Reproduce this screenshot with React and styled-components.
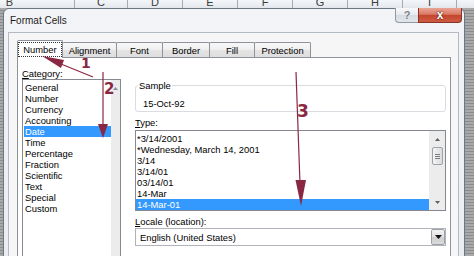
import React from "react";
import styled, { createGlobalStyle } from "styled-components";

const ui = `"Liberation Sans", Arial, sans-serif`;
const mark = "#8a2742";

const GlobalStyle = createGlobalStyle`
  html, body {
    margin: 0;
    padding: 0;
    overflow: hidden;
    background: #a8a8a8;
  }
`;

const columns = [
  { name: "B", w: 130 },
  { name: "C", w: 53 },
  { name: "D", w: 55 },
  { name: "E", w: 55 },
  { name: "F", w: 55 },
  { name: "G", w: 55 },
  { name: "H", w: 55 },
  { name: "I", w: 54 },
  { name: "J", w: 55 },
];

const categories = [
  "General",
  "Number",
  "Currency",
  "Accounting",
  "Date",
  "Time",
  "Percentage",
  "Fraction",
  "Scientific",
  "Text",
  "Special",
  "Custom",
];

const types = [
  "*3/14/2001",
  "*Wednesday, March 14, 2001",
  "3/14",
  "3/14/01",
  "03/14/01",
  "14-Mar",
  "14-Mar-01",
];

const tabs = [
  { label: "Number", w: 46 },
  { label: "Alignment", w: 55 },
  { label: "Font", w: 47 },
  { label: "Border", w: 48 },
  { label: "Fill", w: 46 },
  { label: "Protection", w: 57 },
];

const Screen = styled.div`
  position: relative;
  width: 474px;
  height: 256px;
  overflow: hidden;
  font-family: ${ui};
`;

const Sheet = styled.div`
  display: flex;
  flex-direction: column;
  height: 100%;
`;

const ColumnHeader = styled.div`
  display: flex;
  height: 8px;
  margin-left: -55px;
  overflow: hidden;
  background: linear-gradient(#f4f6f9, #e3e7ec);
`;

const ColCell = styled.div`
  flex: 0 0 ${(p) => p.w}px;
  box-sizing: border-box;
  display: flex;
  align-items: flex-end;
  justify-content: center;
  border-right: 1px solid #a3abb5;
  font-size: 11px;
  line-height: 11px;
  color: #3c3c3c;
`;

const SheetBody = styled.div`
  flex: 1;
  background: repeating-linear-gradient(
    to bottom,
    #a9a9a9 0 2px,
    #8c8c8c 2px 3px
  );
`;

const Dialog = styled.div`
  position: absolute;
  left: 3px;
  top: 8px;
  width: 462px;
  height: 262px;
  box-sizing: border-box;
  display: flex;
  flex-direction: column;
  padding: 0 5px 0 4px;
  border: 1px solid #6a7785;
  border-radius: 6px 6px 0 0;
  background: linear-gradient(#f2f4f7, #e9edf1);
`;

const TitleBar = styled.div`
  display: flex;
  justify-content: space-between;
  align-items: flex-start;
  height: 23px;
  flex: 0 0 23px;
`;

const Title = styled.div`
  margin: 6px 0 0 2px;
  font-size: 10px;
  line-height: 12px;
  color: #1c1c1c;
`;

const Controls = styled.div`
  display: flex;
  margin: -1px -3px 0 0;
`;

const HelpButton = styled.div`
  width: 23px;
  height: 15px;
  box-sizing: border-box;
  display: flex;
  align-items: center;
  justify-content: center;
  border: 1px solid #8f98a3;
  border-right: none;
  border-top: none;
  border-radius: 0 0 0 4px;
  background: linear-gradient(#f7f8fa, #e6e9ed 50%, #d6dbe1 51%, #e2e6ea);
  font-size: 11px;
  font-weight: bold;
  color: #7a828c;
  text-shadow: 0 0 1px #fff;
`;

const CloseButton = styled.div`
  width: 44px;
  height: 15px;
  box-sizing: border-box;
  display: flex;
  align-items: center;
  justify-content: center;
  border: 1px solid #8a3325;
  border-top: none;
  border-radius: 0 0 4px 0;
  background: linear-gradient(#e9a596, #d97a66 45%, #c4452e 52%, #cf5c43);
  font-size: 12px;
  font-weight: bold;
  line-height: 12px;
  color: #fff;
  text-shadow: 0 0 2px #5c1a10, 0 0 1px #5c1a10;
`;

const Client = styled.div`
  flex: 1;
  display: flex;
  flex-direction: column;
  padding: 7px 7px 0 8px;
  border: 1px solid #b3bac3;
  border-bottom: none;
  background: #f6f6f6;
`;

const TabStrip = styled.div`
  display: flex;
  align-items: flex-end;
  height: 18px;
  margin-bottom: -1px;
  position: relative;
  z-index: 1;
`;

const Tab = styled.div`
  position: relative;
  flex: 0 0 ${(p) => p.w}px;
  box-sizing: border-box;
  height: ${(p) => (p.active ? 18 : 15)}px;
  margin-left: ${(p) => (p.first ? 0 : -1)}px;
  margin-bottom: ${(p) => (p.active ? 0 : 1)}px;
  display: flex;
  align-items: center;
  justify-content: center;
  border: 1px solid #8e939b;
  border-bottom: none;
  border-radius: 2px 2px 0 0;
  z-index: ${(p) => (p.active ? 2 : 1)};
  background: ${(p) =>
    p.active
      ? "#ffffff"
      : "linear-gradient(#f8f8f8, #efefef 50%, #e4e4e4 51%, #dedede)"};
  font-size: 9.4px;
  color: #000;
  white-space: nowrap;
`;

const Focus = styled.span`
  align-self: stretch;
  flex: 1;
  margin: 1px 0 0;
  display: flex;
  align-items: center;
  justify-content: center;
  border: 1px dotted #333;
  height: 15px;
  box-sizing: border-box;
`;

const TabPage = styled.div`
  flex: 1;
  display: flex;
  gap: 14px;
  padding: 10px 4px 0 4px;
  border: 1px solid #8e939b;
  border-bottom: none;
  background: #ffffff;
`;

const LeftCol = styled.div`
  flex: 0 0 99px;
  display: flex;
  flex-direction: column;
`;

const RightCol = styled.div`
  flex: 1;
  display: flex;
  flex-direction: column;
`;

const FieldLabel = styled.div`
  height: 11px;
  margin-top: ${(p) => p.mt || 0}px;
  font-size: 9.4px;
  line-height: 11px;
  color: #000;
  white-space: nowrap;
  u {
    text-decoration-thickness: 1px;
    text-underline-offset: 1px;
  }
`;

const ListBox = styled.div`
  display: flex;
  height: ${(p) => p.h}px;
  margin-top: ${(p) => p.mt || 0}px;
  box-sizing: border-box;
  border: 1px solid #848991;
  background: #fff;
  overflow: hidden;
`;

const Items = styled.div`
  flex: 1;
  padding: 2px 0 0 ${(p) => p.inset}px;
`;

const Item = styled.div`
  height: 11px;
  padding-left: 1px;
  font-size: 9.4px;
  line-height: 11px;
  white-space: nowrap;
  color: ${(p) => (p.selected ? "#fff" : "#000")};
  background: ${(p) => (p.selected ? "#3399ff" : "transparent")};
`;

const ScrollBar = styled.div`
  flex: 0 0 ${(p) => p.w}px;
  display: flex;
  flex-direction: column;
  align-items: center;
  background: #ececec;
`;

const ArrowCell = styled.div`
  flex: 0 0 16px;
  display: flex;
  align-items: center;
  justify-content: center;
`;

const Thumb = styled.div`
  flex: 0 0 18px;
  width: 11px;
  box-sizing: border-box;
  display: flex;
  flex-direction: column;
  align-items: center;
  justify-content: center;
  gap: 1px;
  border: 1px solid #9ea3aa;
  border-radius: 2px;
  background: linear-gradient(to right, #f4f4f4, #dcdcdc);
`;

const Grip = styled.span`
  width: 5px;
  height: 1px;
  background: #7a7f86;
`;

const Spacer = styled.div`
  flex: 1;
`;

const SampleBox = styled.fieldset`
  margin: 12px 0 0;
  padding: 7px 7px 2px;
  height: 32px;
  box-sizing: border-box;
  border: 1px solid #d9dde2;
  border-radius: 3px;
  min-width: 0;
`;

const SampleLegend = styled.legend`
  margin-left: -5px;
  padding: 0 1px;
  font-size: 9.4px;
  line-height: 11px;
  color: #000;
`;

const SampleValue = styled.div`
  font-size: 9.4px;
  line-height: 11px;
  color: #000;
`;

const Combo = styled.div`
  display: flex;
  align-items: center;
  height: 18px;
  margin-top: 1px;
  box-sizing: border-box;
  padding-left: 4px;
  border: 1px solid #b1b5bb;
  background: #fff;
  font-size: 9.4px;
  color: #000;
`;

const ComboText = styled.span`
  flex: 1;
  line-height: 11px;
`;

const DropButton = styled.div`
  width: 14px;
  height: 16px;
  box-sizing: border-box;
  display: flex;
  align-items: center;
  justify-content: center;
  border: 1px solid #9ca1a8;
  border-radius: 2px;
  background: linear-gradient(#f3f3f3, #e1e1e1 50%, #cfcfcf 51%, #dadada);
`;

const Overlay = styled.svg`
  position: absolute;
  left: 0;
  top: 0;
  pointer-events: none;
  z-index: 10;
`;

const Tri = ({ dir = "down", w = 5, h = 3, color = "#5e6166" }) => (
  <svg width={w} height={h} viewBox={`0 0 ${w} ${h}`}>
    <polygon
      points={dir === "up" ? `0,${h} ${w},${h} ${w / 2},0` : `0,0 ${w},0 ${w / 2},${h}`}
      fill={color}
    />
  </svg>
);

const Annotations = () => (
  <Overlay width="474" height="256" viewBox="0 0 474 256">
    <g fill={mark} stroke={mark}>
      <line x1="93" y1="77" x2="61" y2="64" strokeWidth="1.2" />
      <polygon points="42,56 64,60 61,68" stroke="none" />
      <line x1="103" y1="72" x2="103" y2="126" strokeWidth="1.2" />
      <polygon points="103,138 98,124 108,124" stroke="none" />
      <line x1="296" y1="72" x2="300" y2="184" strokeWidth="1.2" />
      <polygon points="301,206 295.5,180 306,180" stroke="none" />
    </g>
    <g
      fill={mark}
      fontFamily='"DejaVu Sans", sans-serif'
      fontWeight="bold"
    >
      <text x="81" y="68" fontSize="14">1</text>
      <text x="104" y="94" fontSize="15">2</text>
      <text x="297" y="117" fontSize="17">3</text>
    </g>
  </Overlay>
);

export default function App() {
  return (
    <Screen>
      <GlobalStyle />
      <Sheet>
        <ColumnHeader>
          {columns.map((c) => (
            <ColCell key={c.name} w={c.w}>
              {c.name}
            </ColCell>
          ))}
        </ColumnHeader>
        <SheetBody />
      </Sheet>

      <Dialog>
        <TitleBar>
          <Title>Format Cells</Title>
          <Controls>
            <HelpButton>?</HelpButton>
            <CloseButton>x</CloseButton>
          </Controls>
        </TitleBar>

        <Client>
          <TabStrip>
            {tabs.map((t, i) => (
              <Tab key={t.label} w={t.w} first={i === 0} active={i === 0}>
                {i === 0 ? <Focus>{t.label}</Focus> : t.label}
              </Tab>
            ))}
          </TabStrip>

          <TabPage>
            <LeftCol>
              <FieldLabel>
                <u>C</u>ategory:
              </FieldLabel>
              <ListBox h={190}>
                <Items inset={1}>
                  {categories.map((c) => (
                    <Item key={c} selected={c === "Date"}>
                      {c}
                    </Item>
                  ))}
                </Items>
                <ScrollBar w={9}>
                  <ArrowCell>
                    <Tri dir="up" w={5} h={3} color="#8a8d92" />
                  </ArrowCell>
                </ScrollBar>
              </ListBox>
            </LeftCol>

            <RightCol>
              <SampleBox>
                <SampleLegend>Sample</SampleLegend>
                <SampleValue>15-Oct-92</SampleValue>
              </SampleBox>

              <FieldLabel mt={5}>
                <u>T</u>ype:
              </FieldLabel>
              <ListBox h={81} mt={2}>
                <Items inset={0}>
                  {types.map((t) => (
                    <Item key={t} selected={t === "14-Mar-01"}>
                      {t}
                    </Item>
                  ))}
                </Items>
                <ScrollBar w={16}>
                  <ArrowCell>
                    <Tri dir="up" />
                  </ArrowCell>
                  <Thumb>
                    <Grip />
                    <Grip />
                    <Grip />
                  </Thumb>
                  <Spacer />
                  <ArrowCell>
                    <Tri dir="down" />
                  </ArrowCell>
                </ScrollBar>
              </ListBox>

              <FieldLabel mt={5}>
                <u>L</u>ocale (location):
              </FieldLabel>
              <Combo>
                <ComboText>English (United States)</ComboText>
                <DropButton>
                  <Tri dir="down" w={7} h={4} color="#111" />
                </DropButton>
              </Combo>
            </RightCol>
          </TabPage>
        </Client>
      </Dialog>

      <Annotations />
    </Screen>
  );
}
